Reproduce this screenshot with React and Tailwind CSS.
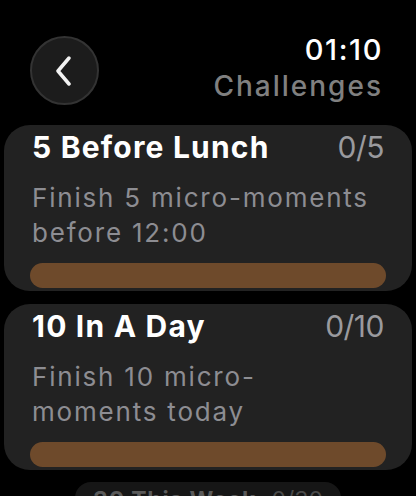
const challenges = [
  { title: '5 Before Lunch', count: '0/5', desc: 'Finish 5 micro-moments before 12:00' },
  { title: '10 In A Day', count: '0/10', desc: 'Finish 10 micro-moments today' },
];

function ChallengeCard({ title, count, desc }) {
  return (
    <div className="rounded-[26px] bg-[#222222] px-[26px] pt-[4px] pb-[3px]">
      <div className="flex items-start justify-between px-[2px]">
        <span className="text-[30px] leading-[36px] font-bold text-white tracking-[1.2px]">{title}</span>
        <span className="text-[30px] leading-[36px] text-[#9a9a9e] tracking-[-0.5px]">{count}</span>
      </div>
      <p className="mt-[15px] px-[2px] text-[26px] leading-[35px] text-[#8d8d92] tracking-[1.8px] pr-[6px]">{desc}</p>
      <div className="mt-[13px] h-[25px] rounded-full bg-[#6e4a2b]" />
    </div>
  );
}

export default function App() {
  return (
    <div className="w-[416px] h-[496px] overflow-hidden bg-black" style={{ fontFamily: 'Inter, "Noto Sans", sans-serif' }}>
      {/* Header */}
      <div className="flex items-start justify-between pl-[30px] pr-[33px] pt-[32px]">
        <button className="mt-[4px] flex h-[69px] w-[69px] items-center justify-center rounded-full border-2 border-[#333333] bg-[#1c1c1c]">
          <svg width="22" height="30" viewBox="0 0 22 30" className="-ml-[4px]">
            <polyline points="17,2 6,15 17,28" fill="none" stroke="#f2f2f2" strokeWidth="3.5" strokeLinecap="round" strokeLinejoin="round" />
          </svg>
        </button>
        <div className="text-right">
          <div className="text-[29px] leading-[36px] font-medium text-white tracking-[1.6px]">01:10</div>
          <div className="text-[28px] leading-[36px] font-medium text-[#808080] tracking-[2px]">Challenges</div>
        </div>
      </div>

      {/* Cards */}
      <div className="mt-[20px] flex flex-col gap-[13px] px-[4px]">
        {challenges.map(c => <ChallengeCard key={c.title} {...c} />)}
        <div className="mx-[71px] -mt-[1px] rounded-[20px] bg-[#161616] px-[18px] pt-[4px]">
          <div className="flex items-start justify-between">
            <span className="text-[23px] leading-[28px] font-bold text-[#5a5a5a] tracking-[0.8px]">30 This Week</span>
            <span className="text-[23px] leading-[28px] text-[#4a4a4a]">0/30</span>
          </div>
        </div>
      </div>
    </div>
  );
}
